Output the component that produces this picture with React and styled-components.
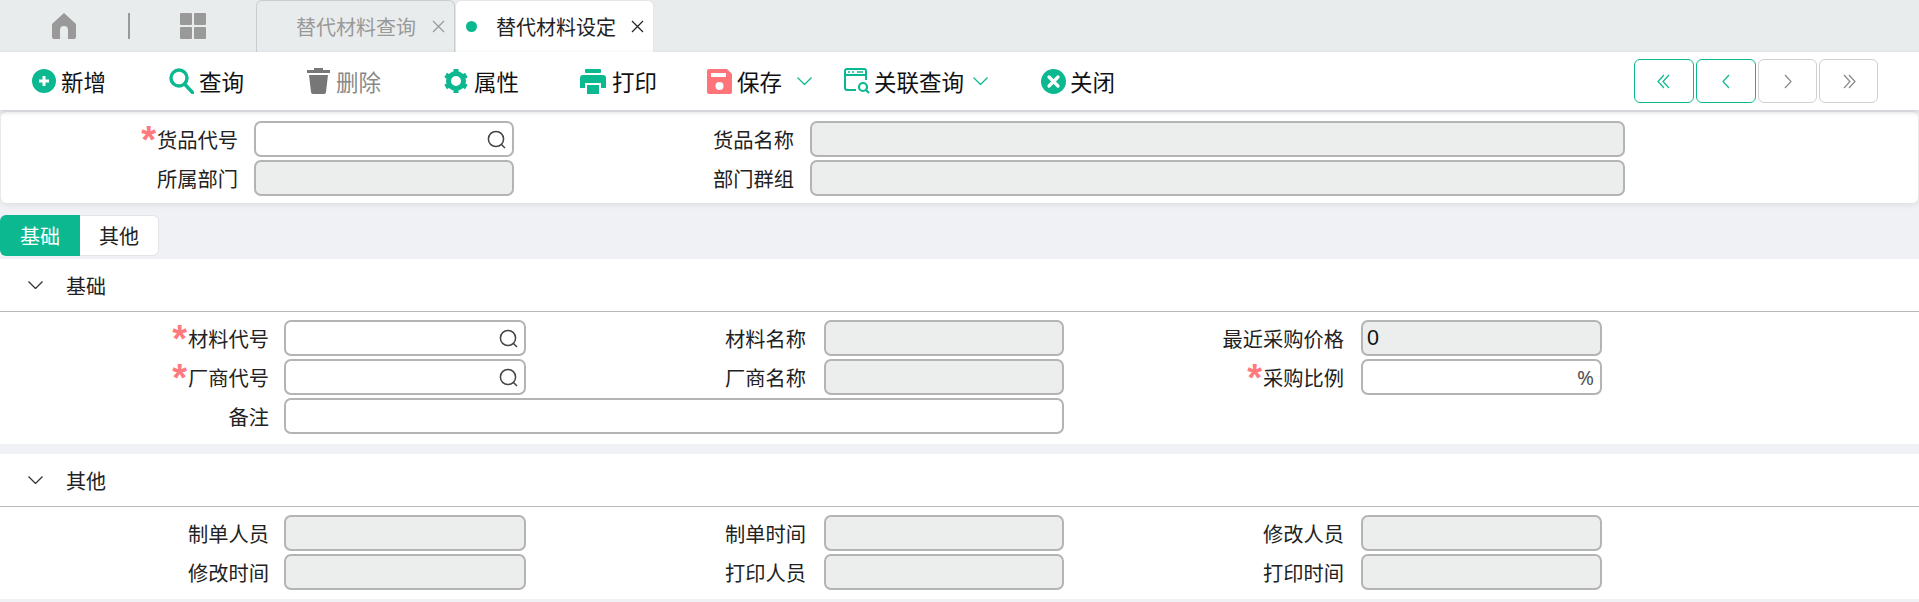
import React from "react";
import styled, { createGlobalStyle } from "styled-components";

const GREEN = "#0cb88f";

const GlobalStyle = createGlobalStyle`
  html, body {
    margin: 0;
    padding: 0;
    background: #f0f1f5;
    font-family: "Noto Sans CJK SC", "Noto Sans", sans-serif;
    color: #111;
  }
  * { box-sizing: border-box; }
`;

const Page = styled.div`
  width: 1919px;
  height: 602px;
  overflow: hidden;
  display: flex;
  flex-direction: column;
`;

/* top tab bar */
const TabBar = styled.div`
  height: 52px;
  flex: none;
  display: flex;
  align-items: stretch;
  background: #e9ecec;
`;
const NavCell = styled.div`
  width: ${(p) => p.$w}px;
  display: flex;
  align-items: center;
  justify-content: center;
`;
const NavLine = styled.div`
  width: 2px;
  height: 26px;
  margin-top: 13px;
  background: #999;
`;
const Tab = styled.div`
  width: 199px;
  display: flex;
  align-items: center;
  padding-left: ${(p) => (p.$active ? 10 : 39)}px;
  font-size: 20px;
  color: ${(p) => (p.$active ? "#222" : "#999")};
  background: ${(p) => (p.$active ? "#fff" : "#e9ecec")};
  border: 1px solid ${(p) => (p.$active ? "#e4e6e8" : "#c9ccd0")};
  border-bottom: 0;
  border-radius: 6px 6px 0 0;
`;
const Dot = styled.span`
  width: 11px;
  height: 11px;
  border-radius: 50%;
  background: ${GREEN};
  margin-right: 19px;
`;
const Close = styled.span`
  margin-left: ${(p) => (p.$active ? 15 : 16)}px;
  display: flex;
  color: ${(p) => (p.$active ? "#222" : "#999")};
`;

/* toolbar */
const Toolbar = styled.div`
  height: 58px;
  flex: none;
  display: flex;
  align-items: center;
  padding: 0 41px 0 32px;
  background: #fff;
  box-shadow: 0 2px 5px rgba(0, 0, 0, 0.16);
  position: relative;
  z-index: 1;
`;
const ToolButton = styled.div`
  width: ${(p) => p.$w}px;
  flex: none;
  display: flex;
  align-items: center;
  gap: ${(p) => p.$gap ?? 5}px;
  font-size: 22.5px;
  color: ${(p) => (p.$muted ? "#888" : "#111")};
`;
const Caret = styled.span`
  margin-left: ${(p) => p.$ml}px;
  display: flex;
`;
const Pager = styled.div`
  margin-left: auto;
  display: flex;
  gap: 2px;
`;
const PageButton = styled.div`
  width: ${(p) => (p.$on ? 60 : 59)}px;
  height: 44px;
  display: flex;
  align-items: center;
  justify-content: center;
  border-radius: 6px;
  background: #fff;
  border: 1.5px solid ${(p) => (p.$on ? GREEN : "#d0d0d0")};
  color: ${(p) => (p.$on ? GREEN : "#888")};
`;

/* form */
const HeadPanel = styled.div`
  height: 91px;
  margin: 2px 1px 0 1px;
  flex: none;
  padding-top: 9px;
  background: #fff;
  border-radius: 6px;
  box-shadow: 0 2px 6px rgba(0, 0, 0, 0.08);
`;
const FormGrid = styled.div`
  display: grid;
  grid-template-columns: ${(p) => p.$cols};
  grid-auto-rows: 36px;
  row-gap: 3px;
  align-items: stretch;
`;
const Label = styled.label`
  display: flex;
  align-items: center;
  justify-content: flex-end;
  padding: 3px ${(p) => p.$pad ?? 16}px 0 0;
  font-size: 20.25px;
  line-height: 1;
  white-space: nowrap;
  color: #222;
`;
const Star = styled.span`
  color: #ff7a7f;
  font-family: "Liberation Sans", sans-serif;
  font-weight: 700;
  font-size: 38px;
  line-height: 24px;
  height: 24px;
  margin: -1px 1px 0 0;
`;
const Field = styled.div`
  display: flex;
  align-items: center;
  justify-content: ${(p) => (p.$value ? "flex-start" : "flex-end")};
  grid-column: ${(p) => (p.$span ? `span ${p.$span}` : "auto")};
  padding: 0 ${(p) => (p.$value ? 4 : 6)}px;
  border: 2px solid #b4b4b4;
  border-radius: 7px;
  background: ${(p) => (p.$off ? "#eceeee" : "#fff")};
  font-family: "Liberation Sans", sans-serif;
  font-size: 21.5px;
  color: #111;
`;
const Suffix = styled.span`
  font-family: "Noto Sans", sans-serif;
  color: #555;
  font-size: 20.5px;
`;
const TabStrip = styled.div`
  flex: none;
  display: flex;
  height: 41px;
  margin-top: 12px;
`;
const StripTab = styled.div`
  width: ${(p) => (p.$active ? 80 : 79)}px;
  display: flex;
  align-items: center;
  justify-content: center;
  font-size: 20px;
  background: ${(p) => (p.$active ? GREEN : "#fff")};
  color: ${(p) => (p.$active ? "#fff" : "#222")};
  border-radius: ${(p) => (p.$active ? "6px 0 0 6px" : "0 6px 6px 0")};
  border: ${(p) => (p.$active ? "0" : "1px solid #e2e4ea")};
  border-left: 0;
`;
const Section = styled.section`
  flex: none;
  margin-top: ${(p) => p.$top}px;
  height: ${(p) => p.$h}px;
  background: #fff;
`;
const SectionHead = styled.div`
  height: 53px;
  display: flex;
  align-items: center;
  gap: 23px;
  padding-left: 28px;
  font-size: 20px;
  color: #222;
  border-bottom: 1.5px solid #b8b8b8;
`;
const SectionBody = styled.div`
  padding-top: 8px;
`;

const HEAD_COLS = "253px 260px 296px 815px";
const BODY_COLS = "284px 242px 298px 240px 297px 241px";

const icon = { display: "block", flex: "none" };

const Home = () => (
  <svg width="26" height="28" viewBox="0 0 26 28" style={icon}>
    <path d="M13 1 L25 12 V25 a2 2 0 0 1 -2 2 H17 V18 a4 4 0 0 0 -8 0 V27 H3 a2 2 0 0 1 -2 -2 V12 Z" fill="#999" />
  </svg>
);
const Grid = () => (
  <svg width="26" height="26" viewBox="0 0 26 26" style={icon} fill="#999">
    <rect x="0" y="0" width="12" height="12" rx="1" />
    <rect x="14" y="0" width="12" height="12" rx="1" />
    <rect x="0" y="14" width="12" height="12" rx="1" />
    <rect x="14" y="14" width="12" height="12" rx="1" />
  </svg>
);
const X = ({ s = 13 }) => (
  <svg width={s} height={s} viewBox="0 0 13 13" style={icon} stroke="currentColor" strokeWidth="1.2">
    <path d="M1 1 L12 12 M12 1 L1 12" />
  </svg>
);
const PlusCircle = () => (
  <svg width="24" height="24" viewBox="0 0 24 24" style={icon}>
    <circle cx="12" cy="12" r="12" fill={GREEN} />
    <path d="M12 7 V17 M7 12 H17" stroke="#fff" strokeWidth="3" />
  </svg>
);
const Search = () => (
  <svg width="25" height="26" viewBox="0 0 25 26" style={icon} fill="none" stroke={GREEN} strokeWidth="3.4">
    <circle cx="10" cy="10" r="8" />
    <path d="M15.5 16 L23.5 24.5" strokeLinecap="round" />
  </svg>
);
const Trash = () => (
  <svg width="23" height="26" viewBox="0 0 23 26" style={icon} fill="#777">
    <rect x="0" y="2" width="23" height="3" />
    <rect x="7" y="0" width="9" height="3" />
    <path d="M2 7 H21 L19 24 a2 2 0 0 1 -2 2 H6 a2 2 0 0 1 -2 -2 Z" />
  </svg>
);
const Gear = () => (
  <svg width="24" height="26" viewBox="0 0 24 24" style={icon}>
    <circle cx="12" cy="12" r="7.5" fill="none" stroke={GREEN} strokeWidth="5" />
    <g stroke={GREEN} strokeWidth="5">
      <path d="M12 0 V4 M12 20 V24" />
      <path d="M1.6 6 L5 8 M19 16 L22.4 18" />
      <path d="M1.6 18 L5 16 M19 8 L22.4 6" />
    </g>
  </svg>
);
const Printer = () => (
  <svg width="26" height="25" viewBox="0 0 26 25" style={icon} fill={GREEN}>
    <rect x="5" y="0" width="16" height="4" rx="1" />
    <path d="M3 6 H23 a3 3 0 0 1 3 3 V19 H21 V14 H5 V19 H0 V9 a3 3 0 0 1 3 -3 Z" />
    <rect x="7" y="16" width="12" height="9" />
  </svg>
);
const Save = () => (
  <svg width="25" height="25" viewBox="0 0 25 25" style={icon}>
    <path d="M2 0 H20 L25 5 V23 a2 2 0 0 1 -2 2 H2 a2 2 0 0 1 -2 -2 V2 a2 2 0 0 1 2 -2 Z" fill="#ff7478" />
    <rect x="4" y="4" width="15" height="4" fill="#fff" />
    <circle cx="12.5" cy="17" r="4" fill="#fff" />
  </svg>
);
const Linked = () => (
  <svg width="26" height="26" viewBox="0 0 26 26" style={icon} fill="none" stroke={GREEN} strokeWidth="2">
    <path d="M12 22 H3 a2 2 0 0 1 -2 -2 V3 a2 2 0 0 1 2 -2 H20 a2 2 0 0 1 2 2 V12" />
    <path d="M1 7 H22" />
    <path d="M4 4 H6 M8 4 H10 M13 4 H19" strokeWidth="1.5" />
    <circle cx="19" cy="19" r="4" strokeWidth="2.2" />
    <path d="M22 22 L25 25" strokeWidth="2.2" />
  </svg>
);
const CloseCircle = () => (
  <svg width="25" height="25" viewBox="0 0 25 25" style={icon}>
    <circle cx="12.5" cy="12.5" r="12.5" fill={GREEN} />
    <path d="M8 8 L17 17 M17 8 L8 17" stroke="#fff" strokeWidth="3.2" strokeLinecap="round" />
  </svg>
);
const Chevron = ({ color = "#333", w = 15, h = 8 }) => (
  <svg width={w} height={h} viewBox="0 0 15 8" style={icon} fill="none" stroke={color} strokeWidth="1.3" preserveAspectRatio="none">
    <path d="M0.5 0.5 L7.5 7.5 L14.5 0.5" />
  </svg>
);
const Arrow = ({ dir, double }) => (
  <svg width="14" height="15" viewBox="0 0 14 15" style={icon} fill="none" stroke="currentColor" strokeWidth="1.2">
    <g transform={dir === "left" ? "" : "translate(14 0) scale(-1 1)"}>
      <path d={double ? "M7 1 L1 7.5 L7 14" : "M10 1 L4 7.5 L10 14"} />
      {double && <path d="M12 1 L6 7.5 L12 14" />}
    </g>
  </svg>
);
const Lens = () => (
  <svg width="19" height="19" viewBox="0 0 19 19" style={icon} fill="none" stroke="#444" strokeWidth="1.5">
    <circle cx="9" cy="9" r="7.6" />
    <path d="M14.5 14.5 L18 18" />
  </svg>
);

const FieldLabel = ({ text, required, pad }) => (
  <Label $pad={pad}>
    {required && <Star>*</Star>}
    {text}
  </Label>
);

export default function App() {
  return (
    <Page>
      <GlobalStyle />
      <TabBar>
        <NavCell $w={128}><Home /></NavCell>
        <NavLine />
        <NavCell $w={126}><Grid /></NavCell>
        <Tab>
          替代材料查询
          <Close><X /></Close>
        </Tab>
        <Tab $active>
          <Dot />
          替代材料设定
          <Close $active><X /></Close>
        </Tab>
      </TabBar>

      <Toolbar>
        <ToolButton $w={137}><PlusCircle />新增</ToolButton>
        <ToolButton $w={138}><Search />查询</ToolButton>
        <ToolButton $w={137} $gap={6} $muted><Trash />删除</ToolButton>
        <ToolButton $w={136} $gap={6}><Gear />属性</ToolButton>
        <ToolButton $w={127} $gap={6}><Printer />打印</ToolButton>
        <ToolButton $w={137}>
          <Save />保存<Caret $ml={10}><Chevron color={GREEN} /></Caret>
        </ToolButton>
        <ToolButton $w={197} $gap={4}>
          <Linked />关联查询<Caret $ml={5}><Chevron color={GREEN} /></Caret>
        </ToolButton>
        <ToolButton $w={100} $gap={4}><CloseCircle />关闭</ToolButton>
        <Pager>
          <PageButton $on><Arrow dir="left" double /></PageButton>
          <PageButton $on><Arrow dir="left" /></PageButton>
          <PageButton><Arrow dir="right" /></PageButton>
          <PageButton><Arrow dir="right" double /></PageButton>
        </Pager>
      </Toolbar>

      <HeadPanel>
        <FormGrid $cols={HEAD_COLS}>
          <FieldLabel text="货品代号" required />
          <Field><Lens /></Field>
          <FieldLabel text="货品名称" />
          <Field $off />
          <FieldLabel text="所属部门" />
          <Field $off />
          <FieldLabel text="部门群组" />
          <Field $off />
        </FormGrid>
      </HeadPanel>

      <TabStrip>
        <StripTab $active>基础</StripTab>
        <StripTab>其他</StripTab>
      </TabStrip>

      <Section $top={3} $h={185}>
        <SectionHead><Chevron />基础</SectionHead>
        <SectionBody>
          <FormGrid $cols={BODY_COLS}>
            <FieldLabel text="材料代号" required pad={15} />
            <Field><Lens /></Field>
            <FieldLabel text="材料名称" pad={18} />
            <Field $off />
            <FieldLabel text="最近采购价格" pad={17} />
            <Field $off $value>0</Field>
            <FieldLabel text="厂商代号" required pad={15} />
            <Field><Lens /></Field>
            <FieldLabel text="厂商名称" pad={18} />
            <Field $off />
            <FieldLabel text="采购比例" required pad={17} />
            <Field><Suffix>%</Suffix></Field>
            <FieldLabel text="备注" pad={15} />
            <Field $span={3} />
          </FormGrid>
        </SectionBody>
      </Section>

      <Section $top={10} $h={145}>
        <SectionHead><Chevron />其他</SectionHead>
        <SectionBody>
          <FormGrid $cols={BODY_COLS}>
            <FieldLabel text="制单人员" pad={15} />
            <Field $off />
            <FieldLabel text="制单时间" pad={18} />
            <Field $off />
            <FieldLabel text="修改人员" pad={17} />
            <Field $off />
            <FieldLabel text="修改时间" pad={15} />
            <Field $off />
            <FieldLabel text="打印人员" pad={18} />
            <Field $off />
            <FieldLabel text="打印时间" pad={17} />
            <Field $off />
          </FormGrid>
        </SectionBody>
      </Section>
    </Page>
  );
}
